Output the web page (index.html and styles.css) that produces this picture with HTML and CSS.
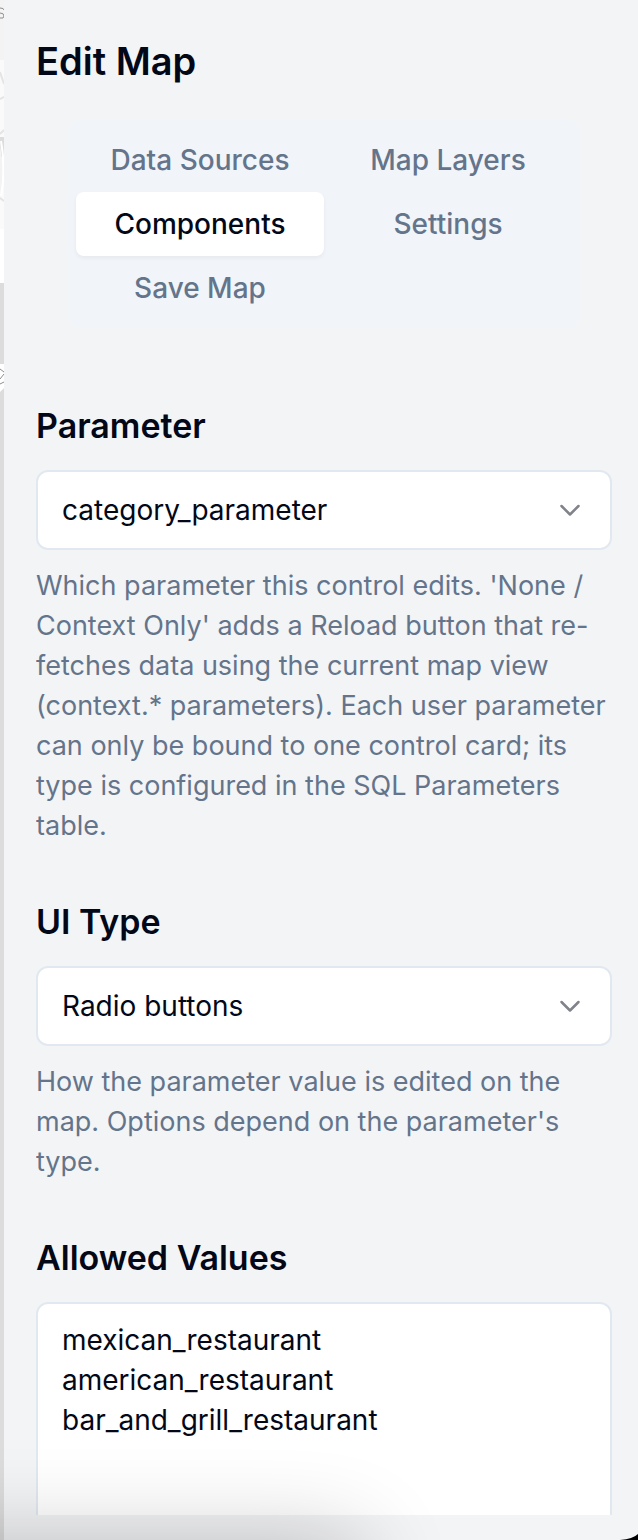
FILE: index.html
```html
<!DOCTYPE html>
<html lang="en">
<head>
<meta charset="utf-8">
<title>Edit Map</title>
<link rel="stylesheet" href="styles.css">
</head>
<body>
<div class="app">
  <div class="map-strip" aria-hidden="true">
    <svg class="map-art" width="4" height="400" viewBox="0 0 4 400">
      <path fill="#fafafa" d="M0 0h4v283H0z"/>
      <path fill="#f3f3f3" d="M0 0h4v60H0z"/>
      <path fill="#fff" d="M0 229h4v54H0z"/>
      <path fill="#dcdcdc" d="M0 137h4v20H0z"/>
      <path fill="#f3f3f3" d="M0 145q5 28 0 56z"/>
      <path fill="none" stroke="#e4e4e4" stroke-width="2" d="M0 72l4 12M0 99l4-2M0 134l4-4M0 198l4 3"/>
      <path fill="none" stroke="#fff" stroke-width="2" d="M1 141q5 28 0 55"/>
      <path fill="none" stroke="#8d8d8d" stroke-width="1" d="M0 8q4 0 4 2M0 13q4 0 4 3t-4 2"/>
      <path fill="#fff" d="M0 364h4v24l-4 4z"/>
      <path fill="none" stroke="#8d8d8d" stroke-width="1" d="M0 369l4 3M0 379l4-5M0 384l4-2"/>
    </svg>
  </div>
  <main class="panel">
    <div class="panel-body">
      <h1 class="title">Edit Map</h1>
      <div class="tabs" role="tablist">
        <button class="tab" role="tab" type="button">Data Sources</button>
        <button class="tab" role="tab" type="button">Map Layers</button>
        <button class="tab tab-active" role="tab" type="button" aria-selected="true">Components</button>
        <button class="tab" role="tab" type="button">Settings</button>
        <button class="tab" role="tab" type="button">Save Map</button>
      </div>
      <form class="fields">
        <div class="field">
          <label class="label" for="parameter">Parameter</label>
          <div class="select-wrap">
            <select class="control select" id="parameter"><option>category_parameter</option></select>
            <svg class="chevron" viewBox="0 0 32 32" aria-hidden="true"><path d="M7.500 12L16 20.500L24.500 12"/></svg>
          </div>
          <p class="help">Which parameter this control edits. 'None / Context Only' adds a Reload button that re-fetches data using the current map view (context.* parameters). Each user parameter can only be bound to one control card; its type is configured in the SQL Parameters table.</p>
        </div>
        <div class="field">
          <label class="label" for="ui-type">UI Type</label>
          <div class="select-wrap">
            <select class="control select" id="ui-type"><option>Radio buttons</option></select>
            <svg class="chevron" viewBox="0 0 32 32" aria-hidden="true"><path d="M7.500 12L16 20.500L24.500 12"/></svg>
          </div>
          <p class="help">How the parameter value is edited on the map. Options depend on the parameter's type.</p>
        </div>
        <div class="field">
          <label class="label" for="values">Allowed Values</label>
          <textarea class="control values" id="values" rows="6">mexican_restaurant
american_restaurant
bar_and_grill_restaurant</textarea>
        </div>
      </form>
    </div>
  </main>
  <div class="floor-shadow" aria-hidden="true"></div>
  <svg class="corner" width="18" height="6" viewBox="0 0 18 6" aria-hidden="true"><path d="M0 6Q13 5 18 0V6z"/></svg>
</div>
</body>
</html>
```
FILE: styles.css
```css
* { box-sizing: border-box; }

body {
  margin: 0;
  font-family: Inter, "Liberation Sans", sans-serif;
  font-size: 28px;
  line-height: 40px;
  color: #020817;
}

.app {
  position: relative;
  display: flex;
  height: 100vh;
  overflow: hidden;
}

.map-strip {
  flex: none;
  width: 4px;
  background: #dcdcdc;
}

.map-art { display: block; }

.panel {
  flex: 1;
  min-width: 0;
  display: flex;
  flex-direction: column;
  padding: 32px 26px 25px 32px;
  background: #f3f4f6;
}

.panel-body {
  flex: 1;
  min-height: 0;
  overflow: hidden;
}

.title {
  margin: 0 0 30px;
  font-size: 38px;
  line-height: 58px;
  font-weight: 600;
}

.tabs {
  display: grid;
  grid-template-columns: 1fr 1fr;
  margin: 0 32px 78px;
  padding: 8px;
  border-radius: 12px;
  background: #f1f5f9;
}

.tab {
  height: 64px;
  padding: 0;
  border: 0;
  border-radius: 8px;
  background: transparent;
  font: inherit;
  font-weight: 500;
  color: #64748b;
}

.tab-active {
  background: #fff;
  color: #020817;
  box-shadow: 0 2px 4px rgba(0, 0, 0, 0.05);
}

.fields {
  display: flex;
  flex-direction: column;
  gap: 56px;
}

.label {
  display: block;
  margin-bottom: 24px;
  font-size: 34px;
  font-weight: 600;
}

.select-wrap { display: grid; align-items: center; }

.control {
  display: block;
  width: 100%;
  border: 2px solid #e2e8f0;
  border-radius: 12px;
  background: #fff;
  font: inherit;
  color: #020817;
}

.select {
  grid-area: 1 / 1;
  height: 80px;
  padding: 0 64px 0 24px;
  appearance: none;
}

.chevron {
  grid-area: 1 / 1;
  justify-self: end;
  width: 32px;
  height: 32px;
  margin-right: 26px;
  pointer-events: none;
  fill: none;
  stroke: #808389;
  stroke-width: 2.5;
  stroke-linecap: round;
  stroke-linejoin: round;
}

.help {
  margin: 16px 0 0;
  font-size: 27px;
  color: #64748b;
}

.values {
  padding: 16px 24px;
  resize: none;
}

.floor-shadow {
  position: absolute;
  top: 100%;
  left: -200px;
  width: 560px;
  height: 200px;
  box-shadow: 0 0 90px rgba(0, 0, 0, 0.24);
  pointer-events: none;
}

.corner {
  position: absolute;
  right: 0;
  bottom: 0;
  fill: #000;
}
```
